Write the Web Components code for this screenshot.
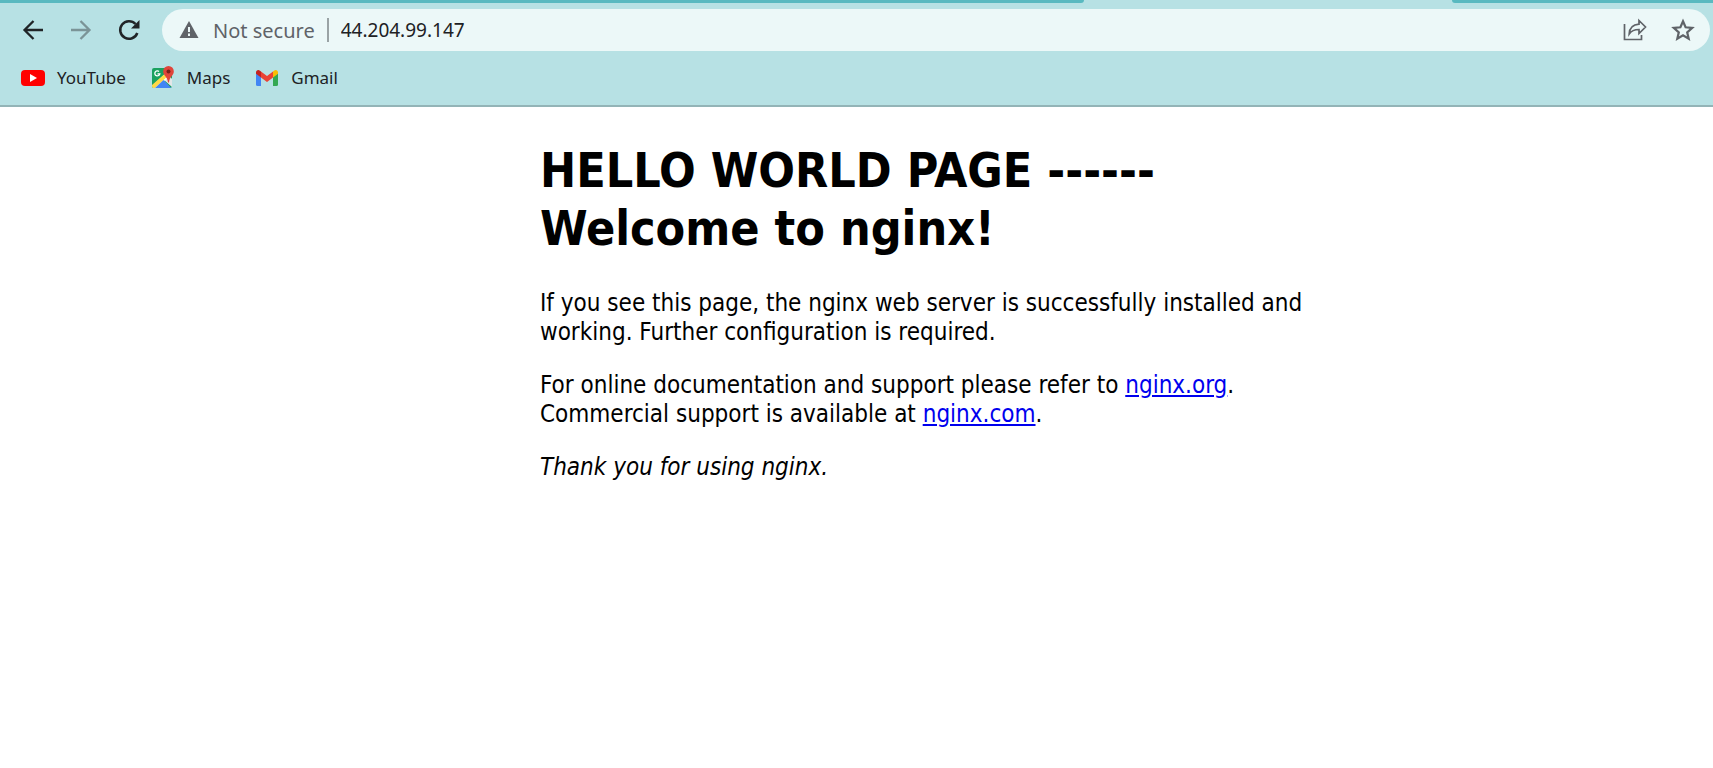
<!DOCTYPE html>
<html lang="en">
<head>
<meta charset="utf-8">
<title>Welcome to nginx!</title>
<style>
body { margin: 0; background: #fff; color: #000; font-family: "Noto Sans", sans-serif; }
</style>
</head>
<body>
<browser-chrome>
  <address-bar slot="address" status="Not secure" url="44.204.99.147"></address-bar>
  <bookmark-link slot="bookmarks" href="https://www.youtube.com">
    <svg slot="icon" width="24" height="24" viewBox="0 0 24 24" aria-hidden="true"><rect y="4" width="24" height="16" rx="4" fill="#f00"/><path d="M9 8l7 4-7 4z" fill="#fff"/></svg>
    YouTube
  </bookmark-link>
  <bookmark-link slot="bookmarks" href="https://maps.google.com">
    <svg slot="icon" width="24" height="24" viewBox="0 0 24 24" aria-hidden="true"><rect x="1" y="2" width="20" height="20" rx="2" fill="#1ba15f"/><path d="M3 22l9-8 8 8z" fill="#4285f4"/><path d="M13 14l5-5 3 4v8z" fill="#e3e6e8"/><path d="M2 19L17 5l3 4L5 22H3q-1 0-1-2z" fill="#fff"/><path d="M1 19L16 6l2 3L4 22q-3 0-3-2z" fill="#ffd846"/><path d="M4 22l8.500-8 7.500 8z" fill="#4285f4"/><path d="M8 5.500a2.500 2.500 0 1 0 .8 2.300H6.500" fill="none" stroke="#fff" stroke-width="1.300"/><path d="M17.500 0a5.300 5.300 0 0 0-5.300 5.400c0 4 4.300 5 4.800 11.100h1c.5-6.100 4.800-7.100 4.800-11.100A5.300 5.300 0 0 0 17.500 0z" fill="#e0443a"/><circle cx="17.500" cy="5.500" r="2" fill="#7a1f18"/></svg>
    Maps
  </bookmark-link>
  <bookmark-link slot="bookmarks" href="https://mail.google.com">
    <svg slot="icon" width="24" height="24" viewBox="0 0 24 24" aria-hidden="true"><path d="M1 7l5 4v9H2.500Q1 20 1 18.500z" fill="#4285f4"/><path d="M18 11l5-4v11.500q0 1.500-1.500 1.500H18z" fill="#34a853"/><path d="M6 5.500l6 4.500 6-4.500v6L12 16l-6-4.500z" fill="#ea4335"/><path d="M1 6.500C1 4 3.500 3.200 5 4.700l1 .8v6L1 7.800z" fill="#c5221f"/><path d="M23 6.500C23 4 20.500 3.200 19 4.700l-1 .8v6l5-3.700z" fill="#fbbc04"/></svg>
    Gmail
  </bookmark-link>
</browser-chrome>
<nginx-page>
  <span slot="title">HELLO WORLD PAGE ------<br>Welcome to nginx!</span>
</nginx-page>

<script>
class BrowserChrome extends HTMLElement {
  constructor() {
    super();
    this.attachShadow({ mode: "open" }).innerHTML = `
      <style>
        :host { display: block; background: #b7e1e4; border-bottom: 2px solid #93b4b7; }
        .tabs { display: grid; grid-template-columns: 1084fr 368fr 261fr; height: 3px; }
        .tabs span:nth-child(odd) { background: #59b9c0; }
        .tabs span:first-child { border-bottom-right-radius: 3px; }
        .tabs span:last-child { border-bottom-left-radius: 3px; }
        .toolbar { display: flex; align-items: center; gap: 24px; padding: 6px 3px 0 21px; }
        button { display: flex; padding: 0; border: 0; background: none; color: #202427; }
        button:disabled { color: #7b9497; }
        slot[name=address] { display: block; flex: 1; }
        .bookmarks { display: flex; align-items: center; gap: 25px; height: 54px; padding-left: 21px; }
      </style>
      <div class="tabs"><span></span><span></span><span></span></div>
      <div class="toolbar">
        <button aria-label="Back"><svg width="24" height="24" viewBox="0 0 24 24" fill="none" stroke="currentColor" stroke-width="2.300"><path d="M22 12H4M12.500 3L3.500 12l9 9"/></svg></button>
        <button aria-label="Forward" disabled><svg width="24" height="24" viewBox="0 0 24 24" fill="none" stroke="currentColor" stroke-width="2.300"><path d="M2 12h18M11.500 3l9 9-9 9"/></svg></button>
        <button aria-label="Reload"><svg width="24" height="24" viewBox="0 0 24 24"><path d="M20.300 15A8.800 8.800 0 1 1 18.500 6" fill="none" stroke="currentColor" stroke-width="2.500"/><path d="M22.500 2v8.500H14z" fill="currentColor"/></svg></button>
        <slot name="address"></slot>
      </div>
      <nav class="bookmarks" aria-label="Bookmarks"><slot name="bookmarks"></slot></nav>`;
  }
}
customElements.define("browser-chrome", BrowserChrome);

class AddressBar extends HTMLElement {
  constructor() {
    super();
    this.attachShadow({ mode: "open" }).innerHTML = `
      <style>
        :host { display: flex; align-items: center; height: 42px; padding: 0 15px; border-radius: 21px; background: #ecf8f8; font-size: 20px; color: #5f6368; box-sizing: border-box; margin-left: -3px; }
        label { display: flex; align-items: center; gap: 12px; white-space: nowrap; }
        label::after { content: ""; width: 2px; height: 24px; background: #9aa3a5; }
        input { flex: 1; min-width: 0; padding: 0; margin-left: 12px; border: 0; outline: 0; background: none; font: inherit; font-size: 19px; line-height: 28px; color: #202124; }
        button { display: flex; padding: 0; margin-left: 24px; border: 0; background: none; color: #5f6368; }
      </style>
      <label for="url"><svg width="24" height="24" viewBox="0 0 24 24" aria-hidden="true"><path d="M12 3L21.500 20h-19z" fill="#5f6368"/><path d="M12 9v5M12 15.500V18" stroke="#ecf8f8" stroke-width="2"/></svg><span></span></label>
      <input id="url" type="text">
      <button aria-label="Share"><svg width="24" height="24" viewBox="0 0 24 24" fill="none" stroke="currentColor" stroke-width="1.700"><path d="M1.500 6v15.500h17V17M16 2.500l6.500 6.500-6.500 6.500v-4C11.500 11.500 8.500 12.500 6.200 16 6.500 10.500 9.500 6.700 16 6.200z"/></svg></button>
      <button aria-label="Bookmark this page"><svg width="24" height="24" viewBox="0 0 24 24" fill="none" stroke="currentColor" stroke-width="2.200"><path d="M12 3.200l2.600 6.100 6.600.6-5 4.400 1.500 6.500-5.700-3.500-5.700 3.500 1.500-6.500-5-4.400 6.600-.6z"/></svg></button>`;
  }
  connectedCallback() {
    this.shadowRoot.querySelector("span").textContent = this.getAttribute("status");
    this.shadowRoot.querySelector("input").value = this.getAttribute("url");
  }
}
customElements.define("address-bar", AddressBar);

class BookmarkLink extends HTMLElement {
  constructor() {
    super();
    this.attachShadow({ mode: "open" }).innerHTML = `
      <style>
        :host { display: block; }
        a { display: flex; align-items: center; gap: 12px; color: #202124; font-size: 17px; line-height: 24px; text-decoration: none; }
      </style>
      <a><slot name="icon"></slot><span><slot></slot></span></a>`;
  }
  connectedCallback() {
    this.shadowRoot.querySelector("a").href = this.getAttribute("href");
  }
}
customElements.define("bookmark-link", BookmarkLink);

class NginxPage extends HTMLElement {
  constructor() {
    super();
    this.attachShadow({ mode: "open" }).innerHTML = `
      <style>
        :host { display: grid; grid-template-columns: 540fr 840fr 333fr; font-family: Tahoma, "DejaVu Sans Condensed", "Noto Sans", sans-serif; font-size: 24px; line-height: 29px; }
        main { grid-column: 2; white-space: nowrap; }
        h1 { margin: 34px 0 32px; font-size: 48px; line-height: 58px; }
        p { margin: 24px 0; }
        a { color: #00e; }
      </style>
      <main>
        <h1><slot name="title"></slot></h1>
        <p>If you see this page, the nginx web server is successfully installed and<br>working. Further configuration is required.</p>
        <p>For online documentation and support please refer to <a href="http://nginx.org/">nginx.org</a>.<br>Commercial support is available at <a href="http://nginx.com/">nginx.com</a>.</p>
        <p><em>Thank you for using nginx.</em></p>
      </main>`;
  }
}
customElements.define("nginx-page", NginxPage);
</script>
</body>
</html>
